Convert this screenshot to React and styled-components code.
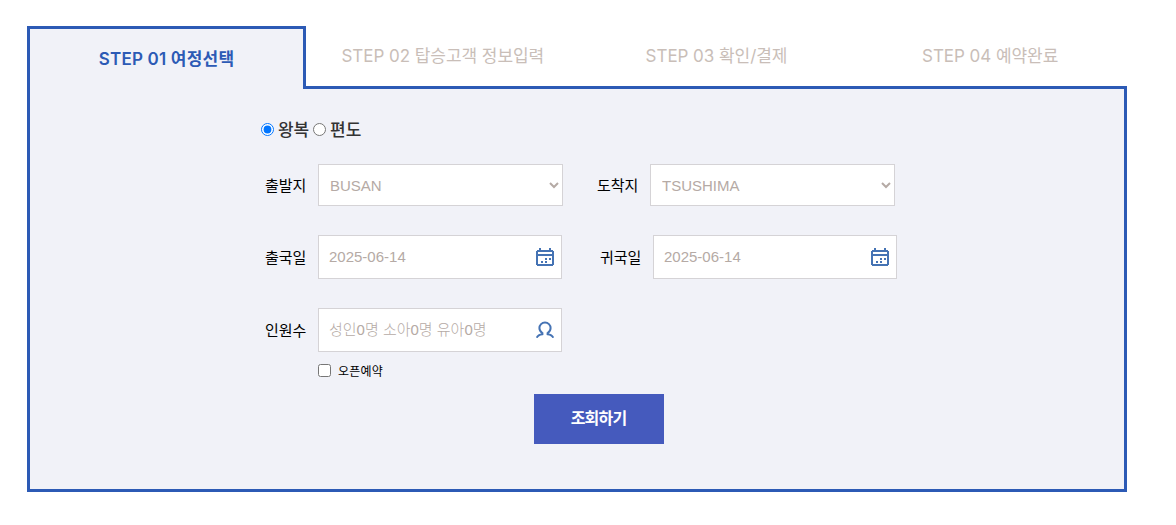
import React, { useState } from 'react'
import styled, { createGlobalStyle } from 'styled-components'

let BLUE = '#2c5ab5'
let PANEL = '#f1f2f8'
let MUTED = '#b5aaa5'
let LINE = '#d5d3d6'
let ICON = '#4573b4'

let Global = createGlobalStyle`
  * {
    box-sizing: border-box;
    margin: 0;
    padding: 0;
  }
  body {
    background: #fff;
    font-family: Inter, "Noto Sans CJK KR", sans-serif;
  }
`

let Page = styled.div`
  width: 1127px;
  padding: 26px 0 0 27px;
`

let Tabs = styled.ul`
  display: flex;
  height: 63px;
  list-style: none;
`

let Tab = styled.li`
  flex: 1;
  display: flex;
  justify-content: center;
  line-height: 24px;
  padding-top: 18px;
  white-space: nowrap;
  font-size: 17px;
  letter-spacing: -0.05px;
  color: #c9beb8;
  border-bottom: 3px solid ${BLUE};
`

let ActiveTab = styled(Tab)`
  flex: none;
  width: 279px;
  color: ${BLUE};
  font-weight: 600;
  letter-spacing: 0.2px;
  background: ${PANEL};
  border: 3px solid ${BLUE};
  border-bottom: 0;
`

let Panel = styled.form`
  height: 403px;
  padding: 31px 0 0 231px;
  background: ${PANEL};
  border: 3px solid ${BLUE};
  border-top: 0;
`

let TripRow = styled.div`
  display: flex;
  align-items: center;
  height: 20px;
  margin-bottom: 24px;
`

let TripLabel = styled.label`
  display: flex;
  align-items: center;
  gap: 4px;
  margin-right: 4px;
  font-size: 17px;
  line-height: 20px;
  font-weight: 500;
  letter-spacing: -0.1px;
  color: #333;
  input {
    width: 13px;
    height: 13px;
    margin-bottom: 1px;
  }
`

let Row = styled.div`
  display: flex;
  gap: ${p => p.$gap || 0}px;
  margin-bottom: 29px;
`

let Field = styled.label`
  display: flex;
  align-items: center;
`

let FieldName = styled.span`
  width: 57px;
  padding: 0 0 2px 4px;
  font-size: 15px;
  letter-spacing: 0;
  white-space: nowrap;
  color: #000;
`

let Select = styled.select`
  width: 245px;
  height: 42px;
  padding-left: 7px;
  font-family: "Liberation Sans", sans-serif;
  font-size: 15px;
  color: ${MUTED};
  background: #fff;
  border: 1px solid ${LINE};
  border-radius: 0;
`

let InputBox = styled.span`
  display: flex;
  align-items: center;
  width: 244px;
  height: 44px;
  padding: 0 7px 0 10px;
  background: #fff;
  border: 1px solid ${LINE};
  svg {
    flex: none;
  }
`

let Input = styled.input`
  flex: 1;
  min-width: 0;
  height: 40px;
  padding-bottom: ${p => p.$lift || 2}px;
  border: 0;
  outline: 0;
  background: none;
  font-family: "Liberation Sans", "Noto Sans CJK KR", sans-serif;
  font-weight: 300;
  font-size: 15px;
  color: ${MUTED};
`

let OpenLabel = styled.label`
  display: flex;
  align-items: center;
  gap: 7px;
  height: 16px;
  margin: -17px 0 0 57px;
  font-size: 12px;
  line-height: 14px;
  letter-spacing: 0.2px;
  color: #000;
  input {
    width: 13px;
    height: 13px;
    margin-bottom: 3px;
  }
`

let Submit = styled.button`
  display: block;
  width: 130px;
  height: 50px;
  margin: 14px 0 0 273px;
  padding: 0 1px 4px 0;
  border: 0;
  background: #455abd;
  color: #fff;
  font-family: inherit;
  font-size: 16px;
  font-weight: 700;
  letter-spacing: -0.8px;
`

function CalendarIcon () {
  return (
    <svg width="18" height="18" viewBox="0 0 18 18" fill={ICON} shapeRendering="crispEdges">
      <path fillRule="evenodd" d="M3 0h2v2h8V0h2v2h2v1h1v14h-1v1H1v-1H0V3h1V2h2zM2 4v2h14V4zM2 8v8h14V8z" />
      <path d="M9 10h2v2H9zM13 10h2v2h-2zM5 13h2v2H5zM9 13h2v2H9z" />
    </svg>
  )
}

function PersonIcon () {
  return (
    <svg width="18" height="18" viewBox="0 0 18 18" fill="none" stroke={ICON} strokeWidth="2">
      <path d="M.8 16.800C1.500 14.700 3.200 13.600 6.400 13.200V12C4.600 11 3.400 9.300 3.400 7.100a5.600 5.600 0 0 1 11.200 0c0 2.200-1.200 3.900-3 4.900v1.200c3.200.4 4.900 1.500 5.600 3.600" />
    </svg>
  )
}

function DateField ({ name }) {
  return (
    <Field>
      <FieldName>{name}</FieldName>
      <InputBox>
        <Input defaultValue="2025-06-14" />
        <CalendarIcon />
      </InputBox>
    </Field>
  )
}

function App () {
  let [trip, setTrip] = useState('round')

  return (
    <Page>
      <Global />
      <Tabs>
        <ActiveTab>STEP 01 여정선택</ActiveTab>
        <Tab>STEP 02 탑승고객 정보입력</Tab>
        <Tab>STEP 03 확인/결제</Tab>
        <Tab>STEP 04 예약완료</Tab>
      </Tabs>
      <Panel onSubmit={e => e.preventDefault()}>
        <TripRow>
          <TripLabel>
            <input type="radio" name="trip" checked={trip === 'round'} onChange={() => setTrip('round')} />
            왕복
          </TripLabel>
          <TripLabel>
            <input type="radio" name="trip" checked={trip === 'oneway'} onChange={() => setTrip('oneway')} />
            편도
          </TripLabel>
        </TripRow>
        <Row $gap={30}>
          <Field>
            <FieldName>출발지</FieldName>
            <Select><option>BUSAN</option></Select>
          </Field>
          <Field>
            <FieldName>도착지</FieldName>
            <Select><option>TSUSHIMA</option></Select>
          </Field>
        </Row>
        <Row $gap={34}>
          <DateField name="출국일" />
          <DateField name="귀국일" />
        </Row>
        <Row>
          <Field>
            <FieldName>인원수</FieldName>
            <InputBox>
              <Input $lift={4} readOnly value="성인0명 소아0명 유아0명" />
              <PersonIcon />
            </InputBox>
          </Field>
        </Row>
        <OpenLabel>
          <input type="checkbox" />
          오픈예약
        </OpenLabel>
        <Submit>조회하기</Submit>
      </Panel>
    </Page>
  )
}

export default App
